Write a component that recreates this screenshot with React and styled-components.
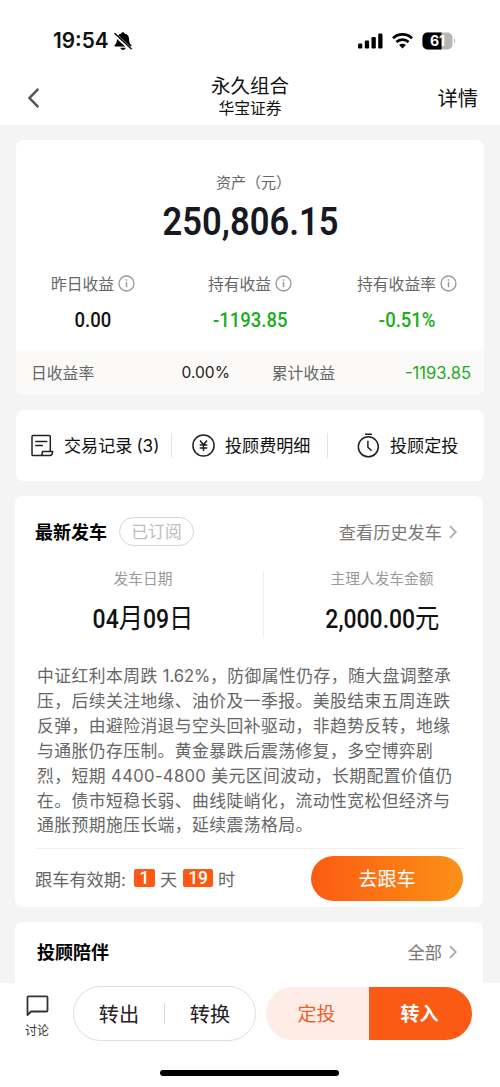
import React from 'react';
import styled, { createGlobalStyle } from 'styled-components';

const GlobalStyle = createGlobalStyle`
  * {
    box-sizing: border-box;
  }
  body {
    margin: 0;
    background: #f4f4f4;
    font-family: Inter, "Noto Sans CJK SC", sans-serif;
    color: #111;
  }
`;

const Page = styled.div`
  width: 500px;
  height: 1087px;
  display: flex;
  flex-direction: column;
  overflow: hidden;
  white-space: nowrap;
`;

const StatusBar = styled.div`
  height: 70px;
  padding: 12px 44px 0 53px;
  display: flex;
  align-items: center;
  justify-content: space-between;
  background: #fff;
`;

const Clock = styled.div`
  display: flex;
  align-items: center;
  gap: 5px;
  font-size: 20.8px;
  font-weight: 600;
  line-height: 24px;
`;

const StatusIcons = styled.div`
  display: flex;
  align-items: center;
  gap: 9px;
`;

const NavBar = styled.div`
  height: 55px;
  padding: 0 22px 0 27px;
  display: grid;
  grid-template-columns: 60px 1fr 60px;
  background: #fff;
`;

const BackButton = styled.div`
  padding-top: 18px;
  line-height: 0;
`;

const NavTitle = styled.div`
  padding: 4px 5px 0 0;
  text-align: center;
  font-size: 19.5px;
  line-height: 24px;
`;

const NavSubtitle = styled.div`
  font-size: 15.8px;
  line-height: 22px;
`;

const NavLink = styled.div`
  text-align: right;
  font-size: 20.3px;
  line-height: 57px;
`;

const Content = styled.div`
  flex: 1;
  min-height: 0;
  padding: 15px 16px 0;
  overflow: hidden;
`;

const Card = styled.div`
  margin: 0 0 15px;
  border-radius: 8px;
  background: #fff;
  overflow: hidden;
`;

const WideCard = styled(Card)`
  margin: 0 1px 15px -1px;
`;

const AssetLabel = styled.div`
  height: 53px;
  padding: 32px 0 0 7px;
  text-align: center;
  font-size: 15px;
  line-height: 22px;
  color: #666;
`;

const Digits = styled.span`
  display: inline-block;
  font-family: Roboto, "Noto Sans CJK SC", sans-serif;
  font-weight: ${(p) => p.$weight || 500};
  transform: scaleX(${(p) => p.$stretch || 0.9});
`;

const Unit = styled.span`
  font-size: 27px;
  font-weight: 400;
`;

const AssetValue = styled.div`
  height: 56px;
  padding-left: 1px;
  text-align: center;
  font-size: 39.5px;
  line-height: 57px;
  color: #181822;
`;

const StatGrid = styled.div`
  height: 101px;
  padding-top: 23px;
  display: grid;
  grid-template-columns: 154px 160px 154px;
`;

const Stat = styled.div`
  text-align: center;
`;

const StatLabel = styled.div`
  height: 23px;
  display: flex;
  align-items: center;
  justify-content: center;
  gap: 4px;
  font-size: 15.8px;
  line-height: 22px;
  color: #666;

  span {
    padding-top: 2px;
  }
`;

const StatValue = styled.div`
  margin-top: 13px;
  font-size: 21px;
  line-height: 24px;
  color: ${(p) => (p.$down ? '#1aad19' : '#111')};
`;

const CardFooter = styled.div`
  height: 45px;
  padding: 0 13px 0 15px;
  display: grid;
  grid-template-columns: 63px 136px 105px 1fr;
  align-items: center;
  background: #fbfaf8;
  font-size: 15.8px;
  color: #666;
`;

const FooterValue = styled.div`
  text-align: right;
  font-size: ${(p) => (p.$down ? 16.6 : 15.6)}px;
  color: ${(p) => (p.$down ? '#1aad19' : '#222')};
`;

const FooterLabel = styled.div`
  text-align: right;
`;

const ShortcutCard = styled(Card)`
  height: 71px;
  display: grid;
  grid-template-columns: 156px 156px 1fr;
  align-items: center;
`;

const Shortcut = styled.div`
  height: 25px;
  padding-left: ${(p) => p.$inset}px;
  display: flex;
  align-items: center;
  gap: 10px;
  font-size: 17.1px;
  line-height: 24px;
  border-right: ${(p) => (p.$last ? 0 : 1)}px solid #e4e4e4;
`;

const Count = styled.span`
  margin-left: 4px;
`;

const SectionHeader = styled.div`
  height: ${(p) => p.$height}px;
  padding: 0 26px 0 ${(p) => p.$inset}px;
  display: flex;
  align-items: center;
`;

const SectionTitle = styled.div`
  padding-bottom: 2px;
  font-size: 18px;
  font-weight: 700;
  color: #000;
`;

const Tag = styled.div`
  width: 75px;
  height: 29px;
  margin-left: 12px;
  border: 1px solid #d6d6d6;
  border-radius: 15px;
  text-align: center;
  font-size: 16.8px;
  line-height: 28px;
  color: #bdbdbd;
`;

const MoreLink = styled.div`
  margin-left: auto;
  display: flex;
  align-items: center;
  gap: 7px;
  font-size: 17.2px;
  color: #777;
`;

const Trip = styled.div`
  height: 67px;
  margin-top: 4px;
  display: grid;
  grid-template-columns: 249px 1fr;
`;

const TripItem = styled.div`
  padding-left: ${(p) => (p.$divided ? 8 : 17)}px;
  border-right: ${(p) => (p.$divided ? 1 : 0)}px solid #f0f0f0;
  text-align: center;
`;

const TripLabel = styled.div`
  margin-top: -2px;
  font-size: 14.7px;
  line-height: 20px;
  color: #999;
`;

const TripValue = styled.div`
  height: 32px;
  margin-top: 14px;
  font-size: 25.5px;
  line-height: 32px;
  color: #111;
`;

const Article = styled.div`
  padding: 26px 0 0 22px;
  font-size: 16.8px;
  line-height: 24.9px;
  letter-spacing: 0.45px;
  color: #666;
`;

const Figure = styled.span`
  font-size: 16.6px;
  letter-spacing: ${(p) => (p.$tight ? -0.1 : 0.35)}px;
`;

const FollowRow = styled.div`
  height: 59px;
  margin: 10px 20px 0;
  display: flex;
  align-items: center;
  border-top: 1px solid #f0f0f0;
  font-size: 17.2px;
  color: #666;
`;

const TimeBadge = styled.span`
  width: ${(p) => p.$width}px;
  height: 18px;
  margin: 0 5px 0 ${(p) => p.$gap}px;
  border-radius: 2px;
  background: #fa5a14;
  color: #fff;
  text-align: center;
  font-family: Roboto, sans-serif;
  font-size: 17.5px;
  font-weight: 500;
  line-height: 19px;
`;

const FollowButton = styled.div`
  width: 152px;
  height: 45px;
  margin-left: auto;
  border-radius: 23px;
  background: linear-gradient(90deg, #fc5b12, #fb9116);
  text-align: center;
  font-size: 19px;
  line-height: 47px;
  color: #fff;
`;

const BottomBar = styled.div`
  height: 104px;
  padding: 3px 28px 0 22px;
  display: grid;
  grid-template-columns: 41px 183px 206px;
  grid-template-rows: 55px 1fr;
  column-gap: 10px;
  background: #fff;
`;

const Discuss = styled.div`
  width: 30px;
  padding-top: 9px;
  text-align: center;
  font-size: 12px;
  line-height: 19px;
  color: #333;

  svg {
    display: block;
    margin: 0 auto 4px;
  }
`;

const OutlinePill = styled.div`
  height: 55px;
  display: grid;
  grid-template-columns: 1fr 1px 1fr;
  align-items: center;
  border: 1px solid #dedede;
  border-radius: 28px;
  text-align: center;
  font-size: 20.2px;
  color: #222;
`;

const PillDivider = styled.div`
  height: 21px;
  background: #d8d8d8;
`;

const SolidPill = styled.div`
  height: 53px;
  margin-top: 1px;
  display: grid;
  grid-template-columns: 1fr 1fr;
  border-radius: 27px;
  overflow: hidden;
  text-align: center;
  font-size: 19px;
  line-height: 55px;
`;

const InvestButton = styled.div`
  padding-right: 2px;
  background: #feece6;
  color: #e8622a;
`;

const TransferInButton = styled.div`
  padding-right: 2px;
  background: #fa5a14;
  color: #fff;
  font-weight: 700;
`;

const HomeIndicator = styled.div`
  grid-column: 1 / -1;
  align-self: start;
  justify-self: center;
  width: 179px;
  height: 6px;
  margin: 29px 0 0 5px;
  border-radius: 3px;
  background: #000;
`;

const BellOffIcon = () => (
  <svg width="18" height="20" viewBox="0 0 18 20">
    <path d="M9 1.200c-.9 0-1.500.6-1.600 1.400C4.300 3.300 2.900 5.500 2.900 8.200c0 3.400-.8 4.700-2.200 5.900-.5.500-.3 1.500.5 1.500h15.600c.8 0 1-1 .5-1.500-1.400-1.200-2.200-2.500-2.200-5.900 0-2.700-1.400-4.900-4.500-5.600C10.500 1.800 9.900 1.200 9 1.200z" />
    <path d="M6.400 16.800h5.200c-.3 1.300-1.300 2.100-2.600 2.100s-2.300-.8-2.600-2.100z" />
    <path d="M.2 3l17 15.700" stroke="#fff" strokeWidth="3.400" />
    <path d="M.9 2.400l16.300 15.400" stroke="#000" strokeWidth="1.400" strokeLinecap="round" />
  </svg>
);

const SignalIcon = () => (
  <svg width="25" height="16" viewBox="0 0 25 16">
    <rect x="0" y="10.500" width="4.300" height="5" rx="1.200" />
    <rect x="6.800" y="7.500" width="4.300" height="8" rx="1.200" />
    <rect x="13.500" y="4" width="4.300" height="11.500" rx="1.200" />
    <rect x="20.200" y="0.500" width="4.300" height="15" rx="1.200" />
  </svg>
);

const WifiIcon = () => (
  <svg width="21" height="16" viewBox="0 0 21 16">
    <g fill="none" stroke="#000" strokeWidth="2.700">
      <path d="M1 5.300a13.700 13.700 0 0 1 19 0" />
      <path d="M4.400 9a8.800 8.800 0 0 1 12.200 0" />
    </g>
    <path d="M10.500 15.600l3.400-3.500a4.900 4.900 0 0 0-6.800 0z" />
  </svg>
);

const BatteryIcon = () => (
  <svg width="34" height="18" viewBox="0 0 34 18">
    <rect x="0.500" y="0.500" width="30" height="17" rx="5" fill="#b5b5b5" />
    <path d="M5.500.5H19.500v17H5.500a5 5 0 0 1-5-5v-7a5 5 0 0 1 5-5z" />
    <path d="M32 6.300c1.500.7 1.500 4.700 0 5.400z" fill="#b5b5b5" />
    <text x="15.500" y="14.200" textAnchor="middle" fontFamily="Inter, sans-serif" fontWeight="700" fontSize="14" fill="#fff">61</text>
  </svg>
);

const BackIcon = () => (
  <svg width="14" height="20" viewBox="0 0 14 20" fill="none" stroke="#555" strokeWidth="2.500">
    <path d="M11.300 .9L2.500 10l8.800 9.100" />
  </svg>
);

const ChevronIcon = () => (
  <svg width="8" height="14" viewBox="0 0 8 14" fill="none" stroke="#aaa" strokeWidth="1.800">
    <path d="M1 1.200L6.800 7 1 12.800" />
  </svg>
);

const InfoIcon = () => (
  <svg width="17" height="17" viewBox="0 0 17 17">
    <circle cx="8.500" cy="8.500" r="7.500" fill="none" stroke="#999" strokeWidth="1.300" />
    <path d="M8.500 7v5.300M8.500 4.300v1.500" stroke="#999" strokeWidth="1.500" />
  </svg>
);

const RecordIcon = () => (
  <svg width="23" height="23" viewBox="0 0 23 23" fill="none" stroke="#222" strokeWidth="1.500" strokeLinejoin="round">
    <path d="M19.300 17.200V2.600a1.200 1.200 0 0 0-1.200-1.200H2.200A1.200 1.200 0 0 0 1 2.600v17.800a1.200 1.200 0 0 0 1.200 1.200h16.500c1.800 0 2.800-1.900 3-4.200H11.400c0 2.300-.8 4.100-2.200 4.100" />
    <path d="M4.800 7.400h11M4.800 11.500h6.500" strokeLinecap="round" />
  </svg>
);

const FeeIcon = () => (
  <svg width="23" height="23" viewBox="0 0 23 23" fill="none" stroke="#222" strokeWidth="1.500">
    <circle cx="11.500" cy="11.500" r="10.600" />
    <path d="M8 6.500l3.500 4.300L15 6.500M11.500 10.800v6.200M7.700 11h7.600M7.700 14h7.600" />
  </svg>
);

const TimerIcon = () => (
  <svg width="23" height="25" viewBox="0 0 23 25" fill="none" stroke="#222" strokeWidth="1.500">
    <circle cx="11.300" cy="13.800" r="10" />
    <path d="M8 1.200h7M10.900 7.700v6.500l3.600 3.500" />
  </svg>
);

const DiscussIcon = () => (
  <svg width="23" height="22" viewBox="0 0 23 22" fill="none" stroke="#333" strokeWidth="1.800" strokeLinejoin="round">
    <path d="M1.500 20V2.300a1 1 0 0 1 1-1h18a1 1 0 0 1 1 1v13.200a1 1 0 0 1-1 1H5z" />
  </svg>
);

const stats = [
  { label: '昨日收益', value: '0.00' },
  { label: '持有收益', value: '-1193.85', down: true },
  { label: '持有收益率', value: '-0.51%', down: true },
];

const article = [
  <>中证红利本周跌 <Figure $tight>1.62%</Figure>，防御属性仍存，随大盘调整承</>,
  '压，后续关注地缘、油价及一季报。美股结束五周连跌',
  '反弹，由避险消退与空头回补驱动，非趋势反转，地缘',
  '与通胀仍存压制。黄金暴跌后震荡修复，多空博弈剧',
  <>烈，短期 <Figure>4400-4800</Figure> 美元区间波动，长期配置价值仍</>,
  '在。债市短稳长弱、曲线陡峭化，流动性宽松但经济与',
  '通胀预期施压长端，延续震荡格局。',
];

export default function App() {
  return (
    <Page>
      <GlobalStyle />
      <StatusBar>
        <Clock>
          19:54
          <BellOffIcon />
        </Clock>
        <StatusIcons>
          <SignalIcon />
          <WifiIcon />
          <BatteryIcon />
        </StatusIcons>
      </StatusBar>
      <NavBar>
        <BackButton>
          <BackIcon />
        </BackButton>
        <NavTitle>
          永久组合
          <NavSubtitle>华宝证券</NavSubtitle>
        </NavTitle>
        <NavLink>详情</NavLink>
      </NavBar>

      <Content>
        <Card>
          <AssetLabel>资产（元）</AssetLabel>
          <AssetValue>
            <Digits $weight={600} $stretch={0.875}>250,806.15</Digits>
          </AssetValue>
          <StatGrid>
            {stats.map((s) => (
              <Stat key={s.label}>
                <StatLabel>
                  <span>{s.label}</span>
                  <InfoIcon />
                </StatLabel>
                <StatValue $down={s.down}>
                  <Digits $stretch={0.88}>{s.value}</Digits>
                </StatValue>
              </Stat>
            ))}
          </StatGrid>
          <CardFooter>
            <div>日收益率</div>
            <FooterValue>0.00%</FooterValue>
            <FooterLabel>累计收益</FooterLabel>
            <FooterValue $down>-1193.85</FooterValue>
          </CardFooter>
        </Card>

        <ShortcutCard>
          <Shortcut $inset={15}>
            <RecordIcon />
            <span>
              交易记录<Count>(3)</Count>
            </span>
          </Shortcut>
          <Shortcut $inset={20}>
            <FeeIcon />
            投顾费明细
          </Shortcut>
          <Shortcut $inset={29} $last>
            <TimerIcon />
            投顾定投
          </Shortcut>
        </ShortcutCard>

        <WideCard>
          <SectionHeader $height={71} $inset={20}>
            <SectionTitle>最新发车</SectionTitle>
            <Tag>已订阅</Tag>
            <MoreLink>
              查看历史发车
              <ChevronIcon />
            </MoreLink>
          </SectionHeader>
          <Trip>
            <TripItem $divided>
              <TripLabel>发车日期</TripLabel>
              <TripValue>
                <Digits>
                  04<Unit>月</Unit>09<Unit>日</Unit>
                </Digits>
              </TripValue>
            </TripItem>
            <TripItem>
              <TripLabel>主理人发车金额</TripLabel>
              <TripValue>
                <Digits>
                  2,000.00<Unit>元</Unit>
                </Digits>
              </TripValue>
            </TripItem>
          </Trip>
          <Article>
            {article.map((line, i) => (
              <div key={i}>{line}</div>
            ))}
          </Article>
          <FollowRow>
            跟车有效期:
            <TimeBadge $width={21} $gap={8}>1</TimeBadge>
            天
            <TimeBadge $width={30} $gap={6}>19</TimeBadge>
            时
            <FollowButton>去跟车</FollowButton>
          </FollowRow>
        </WideCard>

        <WideCard>
          <SectionHeader $height={59} $inset={22}>
            <SectionTitle>投顾陪伴</SectionTitle>
            <MoreLink>
              全部
              <ChevronIcon />
            </MoreLink>
          </SectionHeader>
          <SectionHeader $height={20} $inset={22} />
        </WideCard>
      </Content>

      <BottomBar>
        <Discuss>
          <DiscussIcon />
          讨论
        </Discuss>
        <OutlinePill>
          <span>转出</span>
          <PillDivider />
          <span>转换</span>
        </OutlinePill>
        <SolidPill>
          <InvestButton>定投</InvestButton>
          <TransferInButton>转入</TransferInButton>
        </SolidPill>
        <HomeIndicator />
      </BottomBar>
    </Page>
  );
}
